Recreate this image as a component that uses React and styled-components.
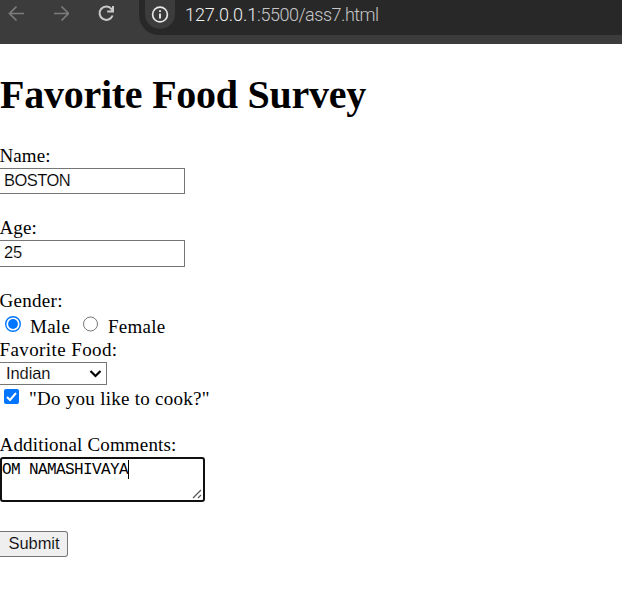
import React from 'react';
import styled, { createGlobalStyle } from 'styled-components';

const GlobalStyle = createGlobalStyle`
  * { box-sizing: border-box; }
  body { margin: 0; background: #fff; overflow: hidden; }
`;

const Page = styled.div`
  width: 622px;
  height: 593px;
  overflow: hidden;
  background: #fff;
  color: #000;
  font-family: 'Liberation Serif', 'Times New Roman', serif;
`;

const Toolbar = styled.header`
  display: flex;
  align-items: flex-start;
  height: 44px;
  background: #3c3c3c;
`;

const NavButtons = styled.nav`
  display: flex;
  gap: 29px;
  width: 139px;
  padding: 5px 0 0 8px;
`;

const NavIcon = styled.svg`
  display: block;
  width: 16px;
  height: 17px;
  fill: none;
  stroke: ${(p) => (p.$active ? '#c9c9c9' : '#7c7c7c')};
  stroke-width: ${(p) => (p.$active ? 2 : 1.7)};
`;

const AddressBar = styled.div`
  display: flex;
  flex: 1;
  height: 35px;
  padding-left: 6px;
  background: #282828;
  border-bottom-left-radius: 20px;
`;

const InfoBadge = styled.div`
  display: flex;
  align-items: flex-end;
  justify-content: center;
  width: 30px;
  height: 29px;
  padding-bottom: 6px;
  background: #3c3c3c;
  border-radius: 0 0 15px 15px;
`;

const Url = styled.div`
  margin-left: 10px;
  color: #c7c7c7;
  font: 300 18px/30px Roboto, 'Liberation Sans', sans-serif;
  letter-spacing: -0.48px;
  white-space: pre;
`;

const Host = styled.span`
  color: #f0f0f0;
  letter-spacing: -0.08px;
`;

const Heading = styled.h1`
  margin: 28px 0 26px;
  height: 46px;
  font-size: 40px;
  line-height: 46px;
  letter-spacing: -0.25px;
  white-space: pre;
`;

const Field = styled.section`
  display: flex;
  flex-direction: column;
  align-items: flex-start;
  height: ${(p) => p.$height}px;
`;

const Label = styled.label`
  height: 24px;
  margin-left: -0.5px;
  font-size: 19px;
  line-height: 23px;
  letter-spacing: ${(p) => p.$spacing || 0}px;
  white-space: pre;
`;

const ChoiceLabel = styled.span`
  width: ${(p) => p.$width}px;
  font-size: 19px;
  line-height: 27px;
  letter-spacing: 0.27px;
  white-space: pre;
`;

const TextInput = styled.input`
  width: 185px;
  height: ${(p) => p.$height || 26}px;
  margin: 0;
  padding: 0 0 2px 4px;
  border: 1px solid #767676;
  border-left: 0;
  outline: none;
  background: #fff;
  color: #000;
  font: 16.5px 'Liberation Sans', Arial, sans-serif;
  letter-spacing: ${(p) => p.$spacing || 0}px;
  -webkit-text-stroke: 0.15px #fff;
`;

const ChoiceRow = styled.div`
  display: flex;
  height: 24px;
  padding-left: ${(p) => p.$inset}px;
`;

const Mark = styled.svg`
  flex: none;
  display: block;
  width: 16px;
  height: 16px;
  margin: ${(p) => p.$top || 0}px ${(p) => p.$gap}px 0 0;
`;

const Select = styled.div`
  display: flex;
  justify-content: space-between;
  width: 107px;
  height: 23px;
  padding: 0 4px 0 6px;
  border: 1px solid #767676;
  border-left: 0;
  font: 16.5px/20px 'Liberation Sans', Arial, sans-serif;
  letter-spacing: -0.1px;
`;

const SelectValue = styled.span`
  -webkit-text-stroke: 0.15px #fff;
`;

const Comments = styled.div`
  display: flex;
  justify-content: space-between;
  width: 205px;
  height: 45px;
  padding: 1px 0 0;
  border: 2px solid #101010;
  border-radius: 3px;
  font: 16px/20px 'Liberation Mono', 'Courier New', monospace;
  letter-spacing: -0.6px;
  white-space: pre;
`;

const Typed = styled.span`
  height: 19px;
  border-right: 1px solid #000;
`;

const Grip = styled.svg`
  align-self: flex-end;
  width: 11px;
  height: 11px;
`;

const Submit = styled.button`
  display: block;
  width: 68px;
  height: 26px;
  padding: 0 0 2px 1px;
  border: 1px solid #767676;
  border-left: 0;
  border-radius: 0 3px 3px 0;
  background: #efefef;
  color: #000;
  font: 16.5px 'Liberation Sans', Arial, sans-serif;
  letter-spacing: -0.1px;
  -webkit-text-stroke: 0.15px #efefef;
`;

export default function App() {
  return (
    <Page>
      <GlobalStyle />
      <Toolbar>
        <NavButtons>
          <NavIcon viewBox="0 0 16 17"><path d="M16 8.5H2M8.5 1.5l-7 7 7 7" /></NavIcon>
          <NavIcon viewBox="0 0 16 17"><path d="M1 8.5h14M8.5 1.5l7 7-7 7" /></NavIcon>
          <NavIcon $active viewBox="0 0 16 17"><path d="M14.6 10.5a6.7 6.7 0 1 1-1-6.4L15 6M15 1v5.5H9.2" /></NavIcon>
        </NavButtons>
        <AddressBar>
          <InfoBadge>
            <svg width="18" height="17" viewBox="0 0 18 17">
              <circle cx="9" cy="8.5" r="7.4" fill="none" stroke="#e8e8e8" strokeWidth="1.7" />
              <path d="M9 7.5v5M9 4.2v1.9" stroke="#e8e8e8" strokeWidth="1.9" />
            </svg>
          </InfoBadge>
          <Url><Host>127.0.0.1</Host>:5500/ass7.html</Url>
        </AddressBar>
      </Toolbar>
      <Heading>Favorite Food Survey</Heading>
      <Field $height={72}>
        <Label $spacing={0.1}>Name:</Label>
        <TextInput defaultValue="BOSTON" $spacing={-0.55} />
      </Field>
      <Field $height={73}>
        <Label $spacing={0.1}>Age:</Label>
        <TextInput defaultValue="25" $height={27} $spacing={-0.2} />
      </Field>
      <Field $height={49}>
        <Label $spacing={0.3}>Gender:</Label>
        <ChoiceRow $inset={5}>
          <Mark $top={3} $gap={9} viewBox="0 0 16 16">
            <circle cx="8" cy="8" r="7.3" fill="#fff" stroke="#0075ff" strokeWidth="1.4" />
            <circle cx="8" cy="8" r="4.9" fill="#0075ff" />
          </Mark>
          <ChoiceLabel $width={52}>Male</ChoiceLabel>
          <Mark $top={3} $gap={10} viewBox="-0.5 0 16 16">
            <circle cx="8" cy="8" r="7" fill="#fff" stroke="#767676" />
          </Mark>
          <ChoiceLabel>Female</ChoiceLabel>
        </ChoiceRow>
      </Field>
      <Field $height={95}>
        <Label $spacing={0.4}>Favorite Food:</Label>
        <Select>
          <SelectValue>Indian</SelectValue>
          <svg width="13" height="21" viewBox="0 0 13 21">
            <path d="M1.5 8l5 5 5-5" fill="none" stroke="#000" strokeWidth="2.2" />
          </svg>
        </Select>
        <ChoiceRow $inset={4}>
          <Mark $top={4} $gap={9} viewBox="0 0 16 16">
            <rect width="15" height="15" rx="2" fill="#0075ff" />
            <path d="M3 8l3 3 6-7" fill="none" stroke="#fff" strokeWidth="2" />
          </Mark>
          <ChoiceLabel>"Do you like to cook?"</ChoiceLabel>
        </ChoiceRow>
      </Field>
      <Field $height={98}>
        <Label $spacing={0.17}>Additional Comments:</Label>
        <Comments>
          <Typed>OM NAMASHIVAYA</Typed>
          <Grip viewBox="0 0 11 11">
            <path d="M1 9l8-8M6 9l3-3" fill="none" stroke="#555" strokeWidth="1.2" />
          </Grip>
        </Comments>
      </Field>
      <Submit>Submit</Submit>
    </Page>
  );
}
